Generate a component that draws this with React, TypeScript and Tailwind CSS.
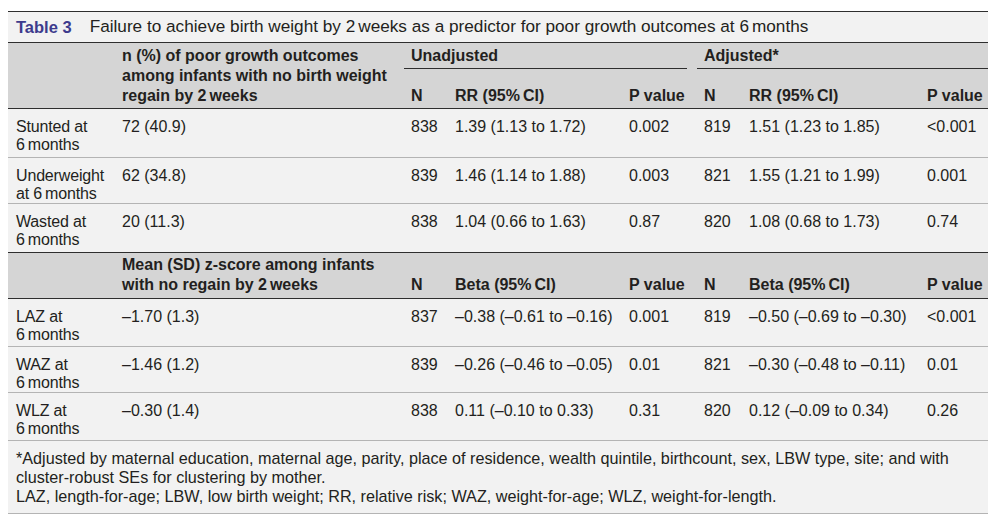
import type { ReactNode } from "react";

const cols = "grid grid-cols-[114px_289px_44px_174px_75px_45px_178px_61px]";

// small gap used between numbers and units (e.g. "6 months")
const Gap = () => <span className="inline-block w-[3px]" />;

type Row = { label: [ReactNode, ReactNode]; key: string; value: string; u: [string, string, string]; a: [string, string, string] };

const sixMonths = (
  <>
    6<Gap />months
  </>
);

const growth: Row[] = [
  { key: "stunted", label: ["Stunted at", sixMonths], value: "72 (40.9)", u: ["838", "1.39 (1.13 to 1.72)", "0.002"], a: ["819", "1.51 (1.23 to 1.85)", "<0.001"] },
  { key: "under", label: ["Underweight", <>at {sixMonths}</>], value: "62 (34.8)", u: ["839", "1.46 (1.14 to 1.88)", "0.003"], a: ["821", "1.55 (1.21 to 1.99)", "0.001"] },
  { key: "wasted", label: ["Wasted at", sixMonths], value: "20 (11.3)", u: ["838", "1.04 (0.66 to 1.63)", "0.87"], a: ["820", "1.08 (0.68 to 1.73)", "0.74"] },
];

const zscore: Row[] = [
  { key: "laz", label: ["LAZ at", sixMonths], value: "–1.70 (1.3)", u: ["837", "–0.38 (–0.61 to –0.16)", "0.001"], a: ["819", "–0.50 (–0.69 to –0.30)", "<0.001"] },
  { key: "waz", label: ["WAZ at", sixMonths], value: "–1.46 (1.2)", u: ["839", "–0.26 (–0.46 to –0.05)", "0.01"], a: ["821", "–0.30 (–0.48 to –0.11)", "0.01"] },
  { key: "wlz", label: ["WLZ at", sixMonths], value: "–0.30 (1.4)", u: ["838", "0.11 (–0.10 to 0.33)", "0.31"], a: ["820", "0.12 (–0.09 to 0.34)", "0.26"] },
];

const heightsA = ["h-[49px]", "h-[46px]", "h-[49px]"];
const heightsB = ["h-[48px]", "h-[46px]", "h-[48px]"];

function DataRow({ row, height, last }: { row: Row; height: string; last?: boolean }) {
  return (
    <div
      className={`${cols} ${height} border-b pt-[9px] leading-[18px] ${
        last ? "border-[#2e2e2e]" : "border-[#b4b4b4]"
      }`}
    >
      <div className="pl-2 whitespace-nowrap tracking-[-0.01em]">
        {row.label[0]}
        <br />
        {row.label[1]}
      </div>
      <div>{row.value}</div>
      <div>{row.u[0]}</div>
      <div className="whitespace-nowrap">{row.u[1]}</div>
      <div>{row.u[2]}</div>
      <div>{row.a[0]}</div>
      <div className="whitespace-nowrap">{row.a[1]}</div>
      <div>{row.a[2]}</div>
    </div>
  );
}

export default function App() {
  return (
    <div className="min-h-[525px] bg-white pt-[11px] font-['Liberation_Sans',Arial,sans-serif] text-[16px] text-[#231f20]">
      <div className="ml-2 w-[980px] bg-[#f2f2f2]">
        <div className="flex h-[32px] items-center gap-[18px] border-y border-[#2e2e2e] pl-2">
          <span className="text-[16.5px] font-bold text-[#3d3b8d]">Table 3</span>
          <span className="text-[17.2px]">
            Failure to achieve birth weight by 2<Gap />weeks as a predictor for poor growth outcomes at 6<Gap />months
          </span>
        </div>

        <div className={`${cols} h-[66px] grid-rows-[26px_39px] border-b border-[#2e2e2e] bg-[#d5d5d5] font-bold leading-[20px]`}>
          <div className="row-span-2" />
          <div className="row-span-2 pt-[3px]">
            n (%) of poor growth outcomes
            <br />
            among infants with no birth weight
            <br />
            regain by 2<Gap />weeks
          </div>
          <div className="col-span-3 -ml-[7px] mr-[17px] border-b border-[#2e2e2e] pl-[7px] pt-[3px]">Unadjusted</div>
          <div className="col-span-3 -ml-[7px] border-b border-[#2e2e2e] pl-[7px] pt-[3px]">Adjusted*</div>
          <div className="pt-[17px]">N</div>
          <div className="pt-[17px]">RR (95%<Gap />CI)</div>
          <div className="pt-[17px] whitespace-nowrap">P value</div>
          <div className="pt-[17px]">N</div>
          <div className="pt-[17px]">RR (95%<Gap />CI)</div>
          <div className="pt-[17px] whitespace-nowrap">P value</div>
        </div>

        {growth.map((r, i) => (
          <DataRow key={r.key} row={r} height={heightsA[i]} last={i === growth.length - 1} />
        ))}

        <div className={`${cols} h-[46px] border-b border-[#2e2e2e] bg-[#d5d5d5] pt-[2px] font-bold leading-[20px]`}>
          <div />
          <div>
            Mean (SD) z-score among infants
            <br />
            with no regain by 2<Gap />weeks
          </div>
          <div className="pt-[20px]">N</div>
          <div className="pt-[20px]">Beta (95%<Gap />CI)</div>
          <div className="pt-[20px] whitespace-nowrap">P value</div>
          <div className="pt-[20px]">N</div>
          <div className="pt-[20px]">Beta (95%<Gap />CI)</div>
          <div className="pt-[20px] whitespace-nowrap">P value</div>
        </div>

        {zscore.map((r, i) => (
          <DataRow key={r.key} row={r} height={heightsB[i]} />
        ))}

        <div className="h-[73px] border-b border-[#b4b4b4] pl-2 pt-[8px] text-[16.2px] leading-[19px]">
          <p className="whitespace-nowrap">
            *Adjusted by maternal education, maternal age, parity, place of residence, wealth quintile, birthcount, sex, LBW type, site; and with
            <br />
            cluster-robust SEs for clustering by mother.
          </p>
          <p>LAZ, length-for-age; LBW, low birth weight; RR, relative risk; WAZ, weight-for-age; WLZ, weight-for-length.</p>
        </div>
      </div>
    </div>
  );
}
